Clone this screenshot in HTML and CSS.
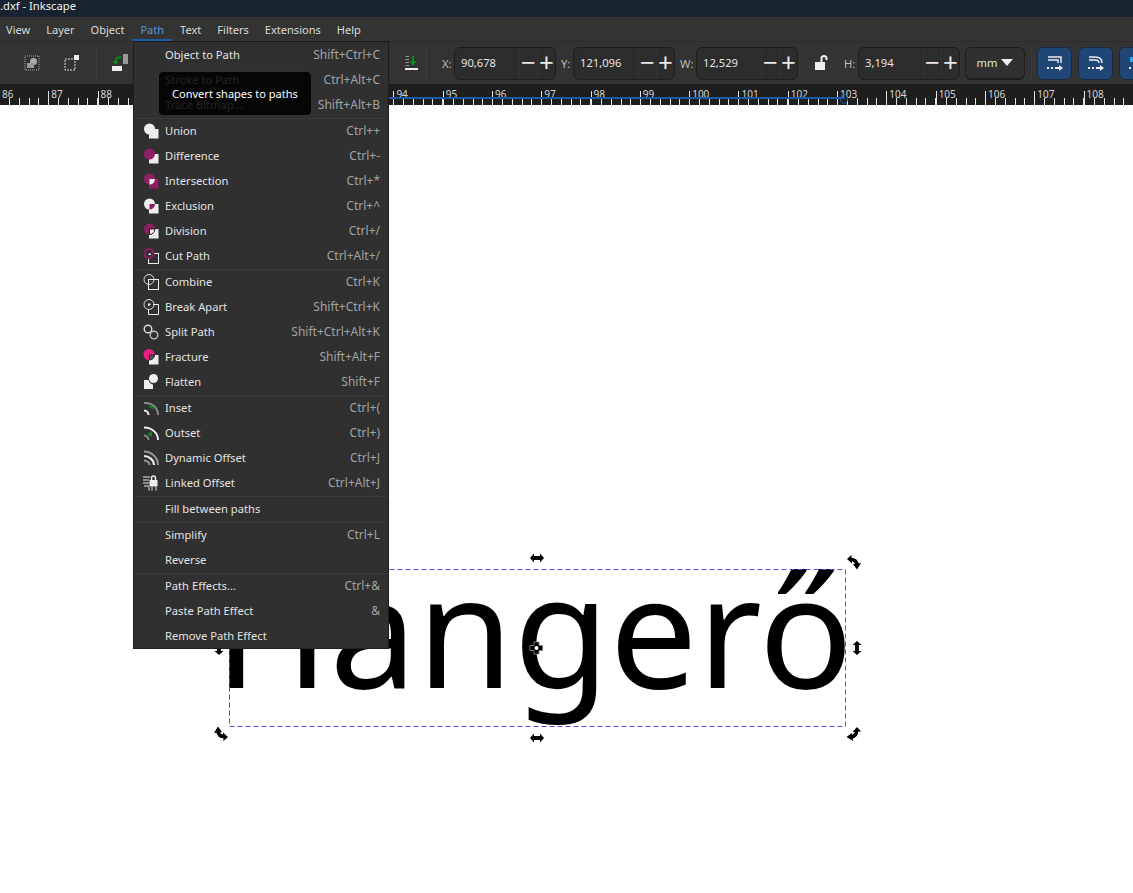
FILE: index.html
```html
<!DOCTYPE html>
<html lang="en">
<head>
    <meta charset="UTF-8">
    <title>Inkscape</title>
    <link rel="stylesheet" href="styles.css">
</head>
<body>
    <div class="titlebar">.dxf - Inkscape</div>

    <div class="menubar">
        <span class="menubar-item">View</span>
        <span class="menubar-item">Layer</span>
        <span class="menubar-item">Object</span>
        <span class="menubar-item active">Path</span>
        <span class="menubar-item">Text</span>
        <span class="menubar-item">Filters</span>
        <span class="menubar-item">Extensions</span>
        <span class="menubar-item">Help</span>
    </div>

    <div class="toolbar">
        <span class="tool">
            <svg width="16" height="16" viewBox="0 0 16 16"><rect x="1" y="1" width="14" height="14" fill="none" stroke="#aaa" stroke-dasharray="1 1"/><circle cx="9.5" cy="6.5" r="3.5" fill="#aaa"/><rect x="3" y="8" width="7" height="5" fill="#999"/></svg>
        </span>
        <span class="tool">
            <svg width="16" height="16" viewBox="0 0 16 16"><rect x="1" y="4" width="10" height="11" fill="none" stroke="#ddd" stroke-dasharray="2 1"/><rect x="10" y="0" width="5" height="5" fill="#eee"/></svg>
        </span>
        <span class="tool-sep"></span>
        <span class="tool">
            <svg width="18" height="18" viewBox="0 0 18 18"><rect x="11" y="0" width="5" height="10" fill="#999"/><rect x="0" y="12" width="10" height="5" fill="#eee"/><path d="M9 3C5 3 3.500 5 3.500 8" fill="none" stroke="#0a8a12" stroke-width="2"/><path d="M0.500 7H6.500L3.500 11Z" fill="#0a8a12"/></svg>
        </span>

        <span class="toolbar-gap"></span>

        <span class="tool tool-narrow">
            <svg width="16" height="16" viewBox="0 0 16 16"><path d="M1.500 1.500H5M1.500 4.500H5M1.500 7.500H5M1.500 10.500H5" stroke="#999"/><rect x="1" y="13" width="13" height="2" fill="#eee"/><path d="M8 0.500H10V6H12.500L9 11L5.500 6H8Z" fill="#0a8a12"/></svg>
        </span>
        <span class="tool-sep tool-sep-tight"></span>

        <label class="field-label field-first">X:</label>
        <div class="spin">
            <span class="spin-value">90,678</span>
            <span class="spin-btn">&minus;</span>
            <span class="spin-btn">+</span>
        </div>
        <label class="field-label">Y:</label>
        <div class="spin">
            <span class="spin-value">121,096</span>
            <span class="spin-btn">&minus;</span>
            <span class="spin-btn">+</span>
        </div>
        <label class="field-label field-wide">W:</label>
        <div class="spin">
            <span class="spin-value">12,529</span>
            <span class="spin-btn">&minus;</span>
            <span class="spin-btn">+</span>
        </div>
        <span class="lock">
            <svg width="14" height="16" viewBox="0 0 14 16"><rect x="1" y="7" width="10" height="8" fill="#eee"/><path d="M7.500 7V3.500A2.500 2.500 0 0 1 12.500 3.500V5" fill="none" stroke="#eee" stroke-width="2"/></svg>
        </span>
        <label class="field-label field-h">H:</label>
        <div class="spin">
            <span class="spin-value">3,194</span>
            <span class="spin-btn">&minus;</span>
            <span class="spin-btn">+</span>
        </div>
        <div class="unit">mm<span class="unit-arrow"></span></div>
        <span class="tool-sep tool-sep-unit"></span>
        <span class="toggle">
            <svg width="18" height="18" viewBox="0 0 18 18"><path d="M2 3H15V9M2 6H12V9" fill="none" stroke="#eee" stroke-width="1.500"/><path d="M1 14H3M5 14H7M9 14H13" stroke="#eee" stroke-width="2"/><path d="M13 11L17 14L13 17Z" fill="#eee"/></svg>
        </span>
        <span class="toggle">
            <svg width="18" height="18" viewBox="0 0 18 18"><path d="M2 3H8C12 3 15 5 15 9M2 6H8C10.500 6 12 7 12 9" fill="none" stroke="#eee" stroke-width="1.500"/><path d="M1 14H3M5 14H7M9 14H13" stroke="#eee" stroke-width="2"/><path d="M13 11L17 14L13 17Z" fill="#eee"/></svg>
        </span>
        <span class="toggle">
            <svg width="18" height="18" viewBox="0 0 18 18"><rect x="2" y="3" width="12" height="5" fill="#2aa7e8"/><path d="M1 14H3M5 14H7M9 14H13" stroke="#eee" stroke-width="2"/></svg>
        </span>
    </div>

    <div class="ruler">
        <span class="ruler-unit">86</span>
        <span class="ruler-unit">87</span>
        <span class="ruler-unit">88</span>
        <span class="ruler-unit">89</span>
        <span class="ruler-unit">90</span>
        <span class="ruler-unit">91</span>
        <span class="ruler-unit">92</span>
        <span class="ruler-unit">93</span>
        <span class="ruler-unit">94</span>
        <span class="ruler-unit">95</span>
        <span class="ruler-unit">96</span>
        <span class="ruler-unit">97</span>
        <span class="ruler-unit">98</span>
        <span class="ruler-unit">99</span>
        <span class="ruler-unit">100</span>
        <span class="ruler-unit">101</span>
        <span class="ruler-unit">102</span>
        <span class="ruler-unit">103</span>
        <span class="ruler-unit">104</span>
        <span class="ruler-unit">105</span>
        <span class="ruler-unit">106</span>
        <span class="ruler-unit">107</span>
        <span class="ruler-unit">108</span>
        <span class="ruler-selection"></span>
    </div>

    <div class="canvas">
        <div class="canvas-text">Hangerő</div>
        <svg class="canvas-overlay" width="1133" height="788" viewBox="0 105 1133 788">
            <defs>
                <path id="arrow-h" d="M-7 0L-3 -4.500V-2H3V-4.500L7 0L3 4.500V2H-3V4.500Z"/>
                <g id="arrow-r">
                    <path d="M-3.500 -2.500Q2.500 -2.500 3 3" fill="none" stroke="#000" stroke-width="3.600"/>
                    <path d="M-2.500 -7L-7 -3L-2 1.500Z"/>
                    <path d="M-1 2L7 1L3 7.500Z"/>
                </g>
            </defs>
            <rect class="sel-box" x="229.500" y="569.500" width="616" height="157"/>
            <use href="#arrow-h" x="537" y="558"/>
            <use href="#arrow-h" x="537" y="738"/>
            <use href="#arrow-h" transform="translate(857 648) rotate(90)"/>
            <use href="#arrow-h" transform="translate(219 648) rotate(90)"/>
            <use href="#arrow-r" transform="translate(854 562)"/>
            <use href="#arrow-r" transform="translate(854 734) rotate(90)"/>
            <use href="#arrow-r" transform="translate(221 734) rotate(180)"/>
            <path d="M534 642H539V645.500H542.500V650.500H539V654H534V650.500H530V645.500H534Z" fill="#000" stroke="#777"/>
            <circle cx="536.500" cy="648" r="2" fill="#fff"/>
        </svg>
    </div>

    <!-- Path menu -->
    <div class="menu">
        <div class="menu-row"><span class="menu-label">Object to Path</span><span class="menu-key">Shift+Ctrl+C</span></div>
        <div class="menu-row"><span class="menu-label">Stroke to Path</span><span class="menu-key">Ctrl+Alt+C</span></div>
        <div class="menu-row"><span class="menu-label">Trace Bitmap...</span><span class="menu-key">Shift+Alt+B</span></div>
        <div class="menu-sep"></div>

        <div class="menu-row">
            <svg class="menu-icon" viewBox="0 0 16 16"><circle cx="6.500" cy="6" r="5.500" fill="#eee"/><rect x="6" y="6" width="9.500" height="9.500" fill="#eee"/></svg>
            <span class="menu-label">Union</span><span class="menu-key">Ctrl++</span>
        </div>
        <div class="menu-row">
            <svg class="menu-icon" viewBox="0 0 16 16"><rect x="6" y="6" width="9.500" height="9.500" fill="#eee"/><circle cx="6.500" cy="6" r="5.500" fill="#8e1f63"/></svg>
            <span class="menu-label">Difference</span><span class="menu-key">Ctrl+-</span>
        </div>
        <div class="menu-row">
            <svg class="menu-icon" viewBox="0 0 16 16"><circle cx="6.500" cy="6" r="5.500" fill="#8e1f63"/><rect x="6" y="6" width="9.500" height="9.500" fill="#8e1f63"/><path d="M6.500 6H12A5.500 5.500 0 0 1 6.500 11.500Z" fill="#eee"/></svg>
            <span class="menu-label">Intersection</span><span class="menu-key">Ctrl+*</span>
        </div>
        <div class="menu-row">
            <svg class="menu-icon" viewBox="0 0 16 16"><circle cx="6.500" cy="6" r="5.500" fill="#eee"/><rect x="6" y="6" width="9.500" height="9.500" fill="#eee"/><path d="M6.500 6H12A5.500 5.500 0 0 1 6.500 11.500Z" fill="#8e1f63"/></svg>
            <span class="menu-label">Exclusion</span><span class="menu-key">Ctrl+^</span>
        </div>
        <div class="menu-row">
            <svg class="menu-icon" viewBox="0 0 16 16"><rect x="6" y="6" width="9.500" height="9.500" fill="#eee"/><circle cx="6.500" cy="6" r="5.500" fill="#8e1f63"/><path d="M6.500 6H12A5.500 5.500 0 0 1 6.500 11.500Z" fill="#eee" stroke="#222"/></svg>
            <span class="menu-label">Division</span><span class="menu-key">Ctrl+/</span>
        </div>
        <div class="menu-row">
            <svg class="menu-icon" viewBox="0 0 16 16"><rect x="5.500" y="5.500" width="10" height="10" fill="none" stroke="#eee"/><circle cx="6" cy="5.500" r="4.500" fill="#303030" stroke="#8e1f63" stroke-width="2"/><path d="M5.500 5.500H8V7H5.500Z" fill="#eee"/></svg>
            <span class="menu-label">Cut Path</span><span class="menu-key">Ctrl+Alt+/</span>
        </div>
        <div class="menu-sep"></div>

        <div class="menu-row">
            <svg class="menu-icon" viewBox="0 0 16 16"><circle cx="6" cy="5.500" r="5" fill="none" stroke="#ddd"/><rect x="5.500" y="5.500" width="10" height="10" fill="none" stroke="#eee"/></svg>
            <span class="menu-label">Combine</span><span class="menu-key">Ctrl+K</span>
        </div>
        <div class="menu-row">
            <svg class="menu-icon" viewBox="0 0 16 16"><path d="M10 5.500H15.500V15.500H5.500V10.500" fill="none" stroke="#eee"/><circle cx="6" cy="5.500" r="5" fill="none" stroke="#ddd"/><path d="M5 4.500H7.500V6H6.500V7H5Z" fill="#eee"/></svg>
            <span class="menu-label">Break Apart</span><span class="menu-key">Shift+Ctrl+K</span>
        </div>
        <div class="menu-row">
            <svg class="menu-icon" viewBox="0 0 16 16"><circle cx="5" cy="5" r="3.800" fill="none" stroke="#ddd" stroke-width="1.400"/><circle cx="11" cy="11" r="3.800" fill="none" stroke="#bbb" stroke-width="1.400"/></svg>
            <span class="menu-label">Split Path</span><span class="menu-key">Shift+Ctrl+Alt+K</span>
        </div>
        <div class="menu-row">
            <svg class="menu-icon" viewBox="0 0 16 16"><rect x="6" y="6" width="9.500" height="9.500" fill="#eee"/><circle cx="6" cy="5.500" r="5.500" fill="#ea1e85"/><path d="M6.500 6H11.500A5.500 5.500 0 0 1 6.500 11Z" fill="#555" stroke="#222"/></svg>
            <span class="menu-label">Fracture</span><span class="menu-key">Shift+Alt+F</span>
        </div>
        <div class="menu-row">
            <svg class="menu-icon" viewBox="0 0 16 16"><path d="M1 6H5.500A6 6 0 0 0 10 10.500V15H1Z" fill="#eee"/><circle cx="10.500" cy="4.500" r="4.500" fill="#eee"/></svg>
            <span class="menu-label">Flatten</span><span class="menu-key">Shift+F</span>
        </div>
        <div class="menu-sep"></div>

        <div class="menu-row">
            <svg class="menu-icon" viewBox="0 0 16 16"><path d="M1 3C9 2 15 8 15 15" fill="none" stroke="#888" stroke-width="2"/><path d="M1 10.500C3.500 10.500 5.500 12.500 5.500 15" fill="none" stroke="#eee" stroke-width="2"/><path d="M5 6.500L9 5L11 10Z" fill="#0c8c14"/></svg>
            <span class="menu-label">Inset</span><span class="menu-key">Ctrl+(</span>
        </div>
        <div class="menu-row">
            <svg class="menu-icon" viewBox="0 0 16 16"><path d="M1 2.500C9 2.500 15 8 15 15" fill="none" stroke="#eee" stroke-width="2"/><path d="M1 10.500C3.500 10.500 5.500 12.500 5.500 15" fill="none" stroke="#888" stroke-width="2"/><path d="M4 9L9 6.500L9 12Z" fill="#0c8c14"/></svg>
            <span class="menu-label">Outset</span><span class="menu-key">Ctrl+)</span>
        </div>
        <div class="menu-row">
            <svg class="menu-icon" viewBox="0 0 16 16"><path d="M1 1.500C9 1.500 15 8 15 15" fill="none" stroke="#999" stroke-width="2"/><path d="M1 6C6 6 11 10 11 15" fill="none" stroke="#eee" stroke-width="2"/><path d="M1 10.500C4 10.500 6.500 12.500 6.500 15" fill="none" stroke="#999" stroke-width="2"/></svg>
            <span class="menu-label">Dynamic Offset</span><span class="menu-key">Ctrl+J</span>
        </div>
        <div class="menu-row">
            <svg class="menu-icon" viewBox="0 0 16 16"><path d="M0 2H7M0 5H6M0 8H6M1 11H6M6 15.500V12M9 15.500V12M13 15.500V12" stroke="#aaa" stroke-width="1.500"/><rect x="6.500" y="5" width="8" height="6.500" fill="#eee"/><path d="M8.500 5V3A2 2 0 0 1 12.500 3V5" fill="none" stroke="#eee" stroke-width="1.500"/></svg>
            <span class="menu-label">Linked Offset</span><span class="menu-key">Ctrl+Alt+J</span>
        </div>
        <div class="menu-sep"></div>

        <div class="menu-row"><span class="menu-label">Fill between paths</span></div>
        <div class="menu-sep"></div>

        <div class="menu-row"><span class="menu-label">Simplify</span><span class="menu-key">Ctrl+L</span></div>
        <div class="menu-row"><span class="menu-label">Reverse</span></div>
        <div class="menu-sep"></div>

        <div class="menu-row"><span class="menu-label">Path Effects...</span><span class="menu-key">Ctrl+&amp;</span></div>
        <div class="menu-row"><span class="menu-label">Paste Path Effect</span><span class="menu-key">&amp;</span></div>
        <div class="menu-row"><span class="menu-label">Remove Path Effect</span></div>
    </div>

    <div class="tooltip">Convert shapes to paths</div>
</body>
</html>
```

FILE: styles.css
```css
* {
    box-sizing: border-box;
}

body {
    margin: 0;
    height: 893px;
    display: flex;
    flex-direction: column;
    position: relative;
    overflow: hidden;
    background-color: #fff;
    font-family: "Noto Sans", sans-serif;
    font-size: 11.2px;
    color: #e4e4e4;
}

.titlebar {
    height: 17px;
    flex: none;
    background-color: #19222f;
    color: #f2f2f2;
    line-height: 12px;
}

.menubar {
    height: 24px;
    flex: none;
    display: flex;
    font-size: 11.05px;
    background-color: #333;
}

.menubar-item {
    padding: 0 8px;
    line-height: 25px;
    color: #d8dcd8;
    border-bottom: 2px solid transparent;
}

.menubar-item:first-child {
    margin-left: -2px;
}

.menubar-item.active {
    color: #5b93d8;
    border-bottom-color: #1c5aa5;
}

.toolbar {
    height: 43px;
    flex: none;
    display: flex;
    align-items: center;
    padding-left: 12px;
    overflow: hidden;
    background-color: #333;
    border-top: 1px solid #2d2d2d;
}

.tool {
    width: 40px;
    flex: none;
    display: flex;
    justify-content: center;
}

.tool-narrow {
    width: 28px;
}

.tool-sep {
    width: 1px;
    height: 32px;
    flex: none;
    margin: 0 4px;
    background-color: #3c3c3c;
}

.tool-sep-tight {
    margin: 0;
}

.tool-sep-unit {
    margin: 0 5px 0 6px;
}

.toolbar-gap {
    width: 257px;
    flex: none;
}

.field-label {
    width: 12px;
    flex: none;
    margin-left: 5px;
    color: #b9bdb9;
    white-space: nowrap;
}

.field-first {
    margin-left: 15px;
}

.field-wide {
    width: 16px;
}

.field-h {
    width: 14px;
    margin-left: 0;
}

.spin {
    width: 102px;
    height: 33px;
    flex: none;
    display: flex;
    align-items: stretch;
    background-color: #2c2c2c;
    border: 1px solid #1e1e1e;
    border-radius: 6px;
}

.spin-value {
    flex: 1;
    padding-left: 6px;
    line-height: 30px;
}

.spin-btn {
    width: 18px;
    flex: none;
    text-align: center;
    border-left: 1px solid #333;
    font-size: 26px;
    line-height: 28px;
    color: #e8e8e8;
}

.lock {
    width: 46px;
    flex: none;
    display: flex;
    justify-content: center;
}

.unit {
    width: 60px;
    height: 33px;
    flex: none;
    margin-left: 5px;
    display: flex;
    align-items: center;
    justify-content: center;
    gap: 4px;
    background-color: #303030;
    border: 1px solid #1e1e1e;
    border-bottom-width: 2px;
    border-radius: 6px;
    color: #d8e8d8;
}

.unit-arrow {
    width: 0;
    height: 0;
    border-left: 6px solid transparent;
    border-right: 6px solid transparent;
    border-top: 7px solid #eee;
}

.toggle {
    width: 35px;
    height: 33px;
    flex: none;
    margin-right: 6px;
    display: flex;
    align-items: center;
    justify-content: center;
    background-color: #1f4675;
    border: 1px solid #1a2a40;
    border-radius: 6px;
}

.ruler {
    height: 21px;
    flex: none;
    display: flex;
    position: relative;
    overflow: hidden;
    margin-left: -1px;
    background-color: #1e1e1e;
}

.ruler-unit {
    width: 49.3px;
    flex: none;
    padding-left: 3px;
    position: relative;
    font-size: 10px;
    line-height: 20px;
    color: #d4d4d4;
    background: repeating-linear-gradient(90deg, #e4e4e4 0 1px, transparent 1px 9.86px) left bottom / 100% 7px no-repeat;
}

/* the long tick at each whole unit */
.ruler-unit::before {
    content: "";
    position: absolute;
    left: 0;
    bottom: 0;
    width: 1px;
    height: 14px;
    background-color: #e4e4e4;
}

.ruler-selection {
    position: absolute;
    left: 390px;
    top: 13px;
    width: 456px;
    height: 2px;
    background-color: #1c5aa5;
}

.ruler-selection::after {
    content: "";
    position: absolute;
    right: -3px;
    top: -3px;
    width: 6px;
    height: 8px;
    border: 1px solid #1c5aa5;
    border-radius: 50%;
}

.canvas {
    flex: 1;
    position: relative;
    overflow: hidden;
    background-color: #fff;
}

.canvas-text {
    position: absolute;
    left: 214px;
    top: 445px;
    font-size: 156px;
    line-height: 156px;
    color: #000;
    white-space: nowrap;
}

.canvas-overlay {
    position: absolute;
    left: 0;
    top: 0;
}

.sel-box {
    fill: none;
    stroke: #5050d8;
    stroke-dasharray: 5 3;
}

.menu {
    position: absolute;
    left: 133px;
    top: 41px;
    width: 256px;
    height: 608px;
    padding-top: 1px;
    background-color: #303030;
    border: 1px solid #1c1c1c;
    border-bottom-color: #222;
}

.menu-row {
    height: 25px;
    display: flex;
    align-items: center;
    padding: 0 8px 2px 31px;
    position: relative;
}

.menu-label {
    flex: 1;
    color: #e2e2e2;
}

.menu-key {
    font-size: 12px;
    color: #a2a2a2;
}

.menu-icon {
    position: absolute;
    left: 9px;
    top: 4px;
    width: 16px;
    height: 16px;
}

.menu-sep {
    height: 1px;
    background-color: #3a3a3a;
}

.tooltip {
    position: absolute;
    left: 158px;
    top: 71px;
    width: 154px;
    height: 45px;
    padding-left: 13px;
    font-size: 11.05px;
    line-height: 43px;
    background-color: rgba(0, 0, 0, 0.86);
    border: 1px solid #333;
    border-radius: 5px;
    color: #fff;
    white-space: nowrap;
}
```
